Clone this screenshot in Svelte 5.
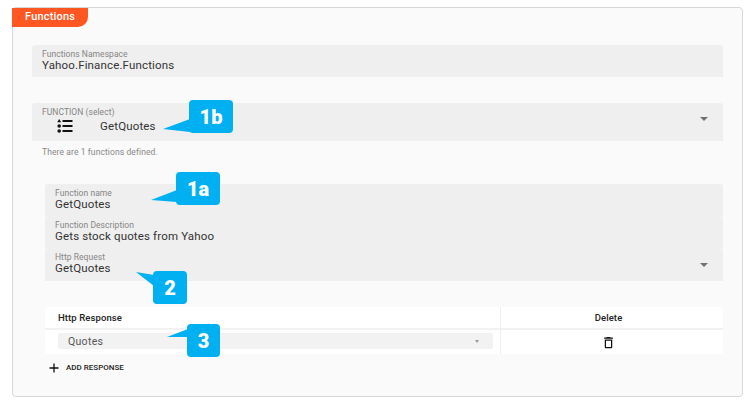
<script lang="ts">
  const tails = [
    "190,119 190,132 163,129",
    "177,190 177,202 151,200",
    "136,272 154,275 154,286",
    "167,337 188,329 188,337",
  ];
</script>

<div class="page">
  <section class="card">
    <div class="tab">Functions</div>

    <div class="group">
      <div class="field">
        <span class="label">Functions Namespace</span>
        <span class="value">Yahoo.Finance.Functions</span>
      </div>

      <div class="field select-field">
        <span class="label">FUNCTION (select)</span>
        <div class="select-row">
          <svg class="list-icon" viewBox="0 0 16 14" width="16" height="14">
            <path d="M2.200 0L4.200 3.200H0.200z" fill="#111" />
            <circle cx="2.200" cy="7" r="1.800" fill="#111" />
            <circle cx="2.200" cy="12" r="1.800" fill="#111" />
            <path d="M5.500 2h10M5.500 7h10M5.500 12h10" stroke="#111" stroke-width="1.800" />
          </svg>
          <span class="value">GetQuotes</span>
        </div>
        <span class="arrow"></span>
      </div>
      <p class="helper">There are 1 functions defined.</p>
    </div>

    <div class="details">
      <div class="field">
        <span class="label">Function name</span>
        <span class="value">GetQuotes</span>
      </div>
      <div class="field">
        <span class="label">Function Description</span>
        <span class="value">Gets stock quotes from Yahoo</span>
      </div>
      <div class="field request">
        <span class="label">Http Request</span>
        <span class="value">GetQuotes</span>
        <span class="arrow"></span>
      </div>

      <div class="table">
        <div class="th">Http Response</div>
        <div class="th center">Delete</div>
        <div class="td response">
          <div class="mini-select">
            <span>Quotes</span>
            <span class="arrow small"></span>
          </div>
        </div>
        <div class="td center">
          <svg viewBox="0 0 24 24" width="15" height="15">
            <path fill="#111" d="M6 19c0 1.100.9 2 2 2h8c1.100 0 2-.9 2-2V7H6v12zM8 9h8v10H8V9zm7.500-5l-1-1h-5l-1 1H5v2h14V4z" />
          </svg>
        </div>
      </div>

      <div class="add">
        <svg viewBox="0 0 10 10" width="10" height="10">
          <path d="M5 0.500v9M0.500 5h9" stroke="#111" stroke-width="1.300" />
        </svg>
        <span>ADD RESPONSE</span>
      </div>
    </div>
  </section>

  <!-- annotation layer -->
  <svg class="tails" viewBox="0 0 756 403" width="756" height="403">
    {#each tails as points}
      <polygon {points} fill="#00b0f0" />
    {/each}
  </svg>
  <div class="badge b1b">1b</div>
  <div class="badge b1a">1a</div>
  <div class="badge b2">2</div>
  <div class="badge b3">3</div>
</div>

<style>
  :global(body) {
    margin: 0;
    background: #fff;
  }
  .page {
    position: relative;
    width: 756px;
    height: 403px;
    padding: 7px 13px 0 12px;
    box-sizing: border-box;
    font-family: Roboto, "Liberation Sans", sans-serif;
    overflow: hidden;
  }
  .card {
    height: 390px;
    box-sizing: border-box;
    background: #fafafa;
    border: 1px solid #d8d8d8;
    border-radius: 4px;
  }
  .tab {
    width: 76px;
    height: 19px;
    box-sizing: border-box;
    margin-left: -1px;
    padding-left: 13px;
    background: #ff5722;
    color: #fff;
    font-size: 11px;
    font-weight: 500;
    letter-spacing: 0.2px;
    line-height: 18px;
    border-radius: 0 0 10px 0;
  }
  .group {
    margin: 18px 19px 0 19px;
  }
  .field {
    position: relative;
    display: flex;
    flex-direction: column;
    height: 32px;
    box-sizing: border-box;
    padding: 4px 10px 0;
    background: #efefef;
    border-radius: 3px 3px 0 0;
  }
  .request {
    height: 33px;
  }
  .label {
    font-size: 8.500px;
    line-height: 10px;
    letter-spacing: 0.05px;
    color: #858585;
  }
  .value {
    font-size: 11.500px;
    line-height: 13px;
    letter-spacing: 0.15px;
    color: #333;
  }
  .select-field {
    height: 38px;
    margin-top: 26px;
  }
  .select-row {
    display: flex;
    align-items: center;
    gap: 27px;
    margin-top: 2px;
    padding-left: 15px;
  }
  .arrow {
    position: absolute;
    right: 15px;
    top: 50%;
    margin-top: -2px;
    border-left: 4.500px solid transparent;
    border-right: 4.500px solid transparent;
    border-top: 4.500px solid #707070;
  }
  .select-field .arrow {
    margin-top: -5px;
  }
  .arrow.small {
    right: 14px;
    margin-top: -1px;
    border-left-width: 2.500px;
    border-right-width: 2.500px;
    border-top-width: 3px;
    border-top-color: #999;
  }
  .helper {
    margin: 6px 0 0 10px;
    font-size: 8.500px;
    line-height: 10px;
    letter-spacing: 0.1px;
    color: #888;
  }
  .details {
    margin: 27px 19px 0 32px;
  }
  .table {
    display: grid;
    grid-template-columns: 455px 1fr;
    grid-template-rows: 23px 24px;
    margin-top: 26px;
    background: #fff;
    border-radius: 4px;
  }
  .th {
    display: flex;
    align-items: center;
    padding-left: 13px;
    font-size: 9.500px;
    font-weight: 500;
    letter-spacing: 0.1px;
    color: #222;
    border-bottom: 2px solid #f2f2f2;
  }
  .td {
    display: flex;
    align-items: center;
    padding-left: 13px;
  }
  .td.response {
    padding-bottom: 2px;
  }
  .th.center,
  .td.center {
    justify-content: center;
    padding-left: 0;
    padding-right: 7px;
    border-left: 1px solid #eee;
  }
  .mini-select {
    position: relative;
    display: flex;
    align-items: center;
    width: 435px;
    height: 16px;
    padding-left: 10px;
    box-sizing: border-box;
    background: #f2f2f2;
    border-radius: 2px;
    font-size: 10.500px;
    letter-spacing: 0.3px;
    color: #555;
  }
  .add {
    display: flex;
    align-items: center;
    gap: 7px;
    margin: 9px 0 0 4px;
    font-size: 8px;
    font-weight: 500;
    line-height: 10px;
    color: #222;
  }
  .tails {
    position: absolute;
    left: 0;
    top: 0;
    pointer-events: none;
  }
  .badge {
    position: absolute;
    display: flex;
    align-items: center;
    justify-content: center;
    height: 33px;
    box-sizing: border-box;
    background: #00b0f0;
    border-radius: 4px;
    color: #fff;
    font-size: 20px;
    font-weight: 900;
  }
  .b1b {
    left: 189px;
    top: 100px;
    width: 44px;
  }
  .b1a {
    left: 176px;
    top: 172px;
    width: 44px;
  }
  .b2 {
    left: 153px;
    top: 271px;
    width: 34px;
  }
  .b3 {
    left: 187px;
    top: 324px;
    width: 33px;
  }
</style>
